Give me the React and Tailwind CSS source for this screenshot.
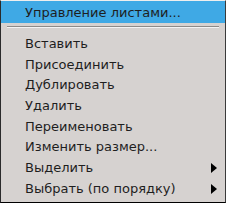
import React from "react";

const items = [
    { label: "Вставить" },
    { label: "Присоединить" },
    { label: "Дублировать" },
    { label: "Удалить" },
    { label: "Переименовать" },
    { label: "Изменить размер..." },
    { label: "Выделить", sub: true },
    { label: "Выбрать (по порядку)", sub: true },
];

function Arrow() {
    return (
        <svg width="6" height="10" viewBox="0 0 6 10" className="block">
            <path d="M0 0 L6 5 L0 10 Z" fill="#000" />
        </svg>
    );
}

export default function App() {
    return (
        <div
            className="w-[226px] h-[203px] bg-[#d6d2d0] text-[#1e1e1e] text-[13px] border-t border-t-[#eeeeee] border-l border-l-[#2a2a2a] border-r border-r-[#3a3a3a] border-b border-b-black flex flex-col overflow-hidden"
            style={{ fontFamily: '"DejaVu Sans", sans-serif' }}
        >
            <div className="h-[22px] bg-[#3fa9e5] flex items-center pl-[24px] pt-[2px] shrink-0">
                Управление листами...
            </div>
            <div className="h-[11px] pt-[3px] px-[6px] shrink-0">
                <div className="h-px bg-[#8c8a88]" />
                <div className="h-px bg-[#f4f4f4]" />
            </div>
            {items.map((it) => (
                <div
                    key={it.label}
                    className="h-[20.7px] leading-[20.7px] flex items-center justify-between pl-[24px] pr-[8px] shrink-0"
                >
                    <span>{it.label}</span>
                    {it.sub && <Arrow />}
                </div>
            ))}
        </div>
    );
}
